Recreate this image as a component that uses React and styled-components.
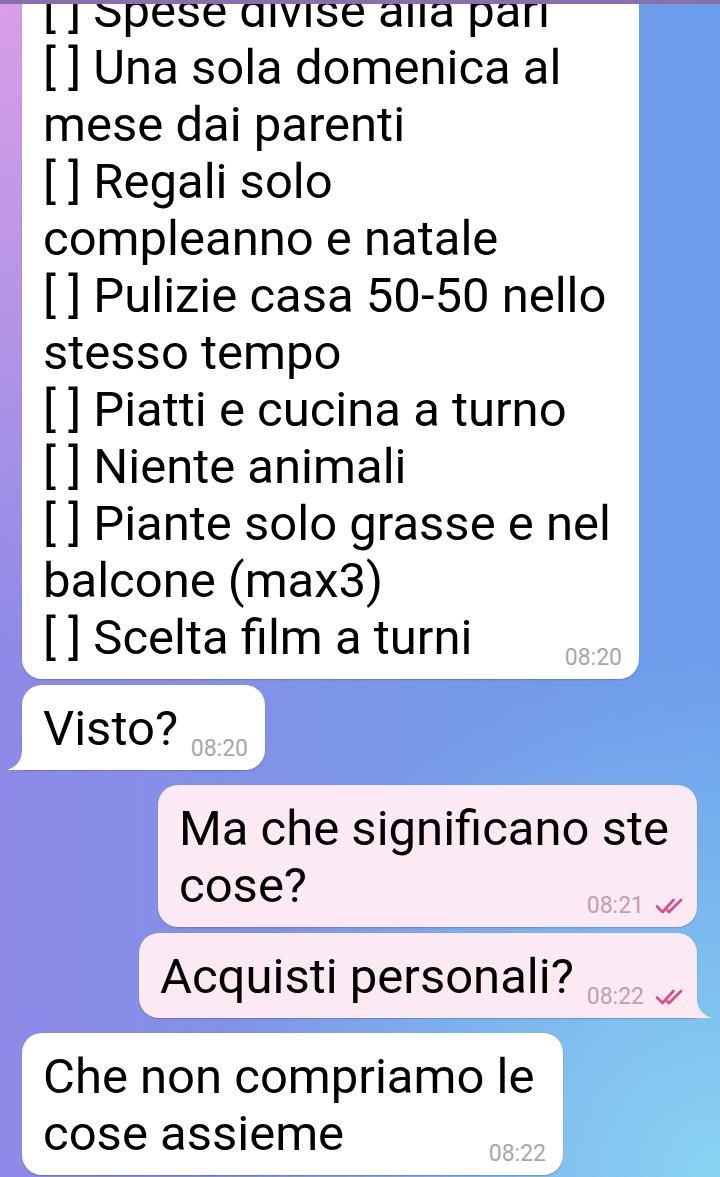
import React from 'react'
import styled, { createGlobalStyle } from 'styled-components'

const GlobalStyle = createGlobalStyle`
  html, body {
    margin: 0;
    padding: 0;
    height: 100%;
  }
  body {
    font-family: Roboto, "Noto Sans", "Liberation Sans", sans-serif;
    -webkit-font-smoothing: antialiased;
  }
  #root {
    height: 100%;
  }
`

const messages = [
  {
    id: 1,
    out: false,
    width: 617,
    time: '08:20',
    lines: [
      '[ ] Spese divise alla pari',
      '[ ] Una sola domenica al',
      'mese dai parenti',
      '[ ] Regali solo',
      'compleanno e natale',
      '[ ] Pulizie casa 50-50 nello',
      'stesso tempo',
      '[ ] Piatti e cucina a turno',
      '[ ] Niente animali',
      '[ ] Piante solo grasse e nel',
      'balcone (max3)',
      '[ ] Scelta film a turni',
    ],
  },
  { id: 2, out: false, width: 243, time: '08:20', tail: true, lines: ['Visto?'] },
  { id: 3, out: true, width: 539, time: '08:21', lines: ['Ma che significano ste', 'cose?'] },
  { id: 4, out: true, width: 558, time: '08:22', tail: true, lines: ['Acquisti personali?'] },
  { id: 5, out: false, width: 541, time: '08:22', lines: ['Che non compriamo le', 'cose assieme'] },
]

const ReadChecks = () => (
  <svg width="31" height="16" viewBox="0 0 31 16" fill="none">
    <path d="M2 8.5 L7.5 14 L18.5 2" stroke="#d94f8b" strokeWidth="2.8" strokeLinecap="round" strokeLinejoin="round" />
    <path d="M12.5 12.5 L14 14 L26 2" stroke="#d94f8b" strokeWidth="2.8" strokeLinecap="round" strokeLinejoin="round" />
  </svg>
)

const BubbleTail = ({ out }) => (
  <Tail $out={out} width="16" height="20" viewBox="0 0 16 20">
    <path d="M15 0 C15 10 10 17 0 20 L16 20 L16 0 Z" />
  </Tail>
)

const App = () => {
  return (
    <Screen>
      <GlobalStyle />
      <HeaderEdge />
      <Messages>
        {messages.map((m, i) => {
          const prev = messages[i - 1]
          const newGroup = prev && prev.out !== m.out
          return (
            <Bubble
              key={m.id}
              $out={m.out}
              $width={m.width}
              $tail={m.tail}
              $gap={!prev ? 0 : newGroup ? 15 : 6}
            >
              <Text>
                {m.lines.map((line, j) => (
                  <Line key={j}>{line}</Line>
                ))}
              </Text>
              <Meta $out={m.out}>
                <Time>{m.time}</Time>
                {m.out && <ReadChecks />}
              </Meta>
              {m.tail && <BubbleTail out={m.out} />}
            </Bubble>
          )
        })}
      </Messages>
    </Screen>
  )
}

const Screen = styled.div`
  height: 100vh;
  display: flex;
  flex-direction: column;
  overflow: hidden;
  background:
    radial-gradient(ellipse 75% 55% at 0% 0%, rgba(218, 158, 230, 1) 0%, rgba(218, 158, 230, 0) 100%),
    radial-gradient(ellipse 70% 45% at 100% 100%, rgba(138, 212, 242, 1) 0%, rgba(138, 212, 242, 0) 100%),
    linear-gradient(to right, #8e8ae7 0%, #7b96e8 50%, #6b9deb 100%);
`

const HeaderEdge = styled.div`
  height: 4px;
  flex-shrink: 0;
  background: #8a6fae;
  position: relative;
  z-index: 2;
`

const Messages = styled.div`
  flex: 1;
  min-height: 0;
  display: flex;
  flex-direction: column;
  justify-content: flex-end;
  padding: 0 0 2px;
`

const Bubble = styled.div`
  position: relative;
  flex-shrink: 0;
  box-sizing: border-box;
  width: ${(p) => p.$width}px;
  margin-top: ${(p) => p.$gap}px;
  margin-left: ${(p) => (p.$out ? 0 : 22)}px;
  margin-right: ${(p) => (p.$out ? 23 : 0)}px;
  align-self: ${(p) => (p.$out ? 'flex-end' : 'flex-start')};
  padding: 15px 17px 13px 21px;
  background: ${(p) => (p.$out ? '#fbeaf3' : '#ffffff')};
  border-radius: 20px;
  ${(p) => p.$tail && (p.$out ? 'border-bottom-right-radius: 0;' : 'border-bottom-left-radius: 0;')}
  box-shadow: 0 1px 1.5px rgba(50, 40, 110, 0.28);
`

const Text = styled.div`
  font-size: 49px;
  line-height: 57px;
  color: #000;
  white-space: nowrap;
`

const Line = styled.div``

const Meta = styled.span`
  position: absolute;
  right: ${(p) => (p.$out ? 11 : 17)}px;
  bottom: 10px;
  display: flex;
  align-items: center;
  gap: 11px;
  color: ${(p) => (p.$out ? '#bf9fb0' : '#a7a7a7')};
`

const Time = styled.span`
  font-size: 23px;
  line-height: 23px;
`

const Tail = styled.svg`
  position: absolute;
  bottom: 0;
  ${(p) => (p.$out ? 'right: -15px; transform: scaleX(-1);' : 'left: -15px;')}
  fill: ${(p) => (p.$out ? '#fbeaf3' : '#ffffff')};
`

export default App
